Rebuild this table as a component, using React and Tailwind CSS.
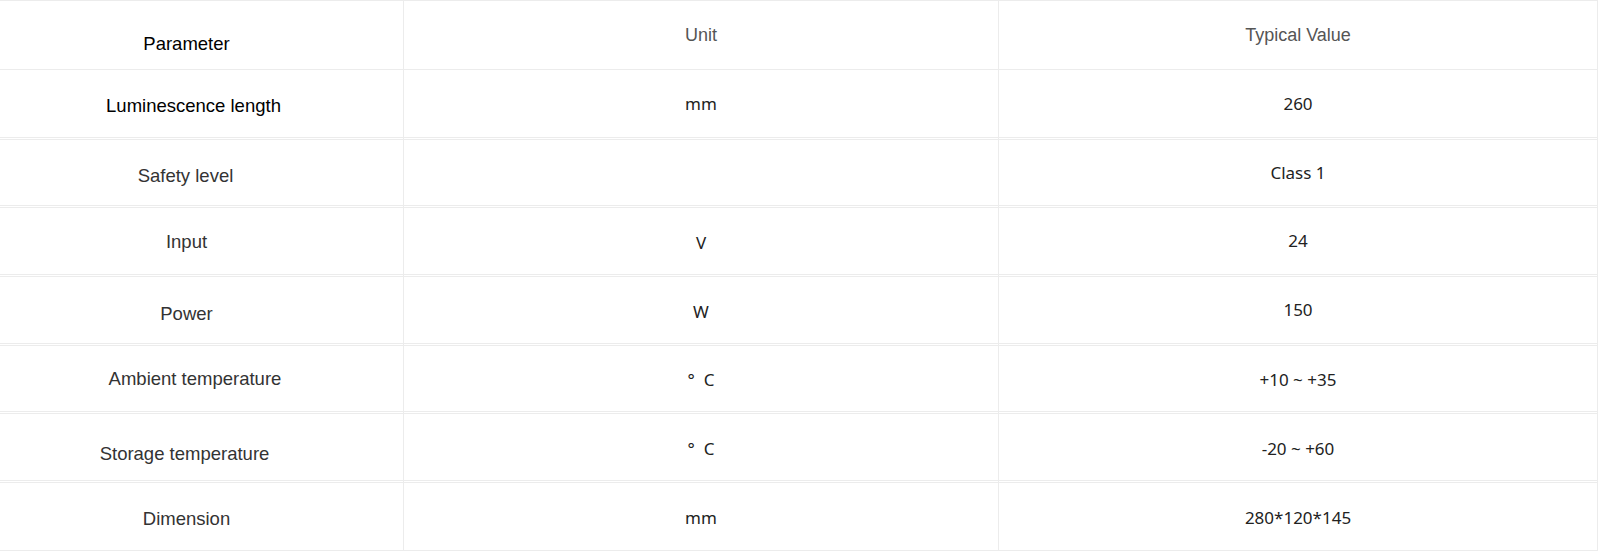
import React from 'react';

const rows = [
  {
    h: 'h-[70px]',
    line: 'border-t border-b',
    cells: [
      { text: 'Parameter', cls: 'pr-[30px] pt-[17px] text-black font-["Liberation_Sans",Arial,sans-serif] text-[18.5px]' },
      { text: 'Unit', cls: 'text-[#555] font-["Liberation_Sans",Arial,sans-serif] text-[18px]' },
      { text: 'Typical Value', cls: 'text-[#555] font-["Liberation_Sans",Arial,sans-serif] text-[18px]' },
    ],
  },
  {
    h: 'h-[70px]',
    line: 'border-b-[3px] border-double',
    cells: [
      { text: 'Luminescence length', cls: 'pr-[16px] pt-[5px] text-black font-["Liberation_Sans",Arial,sans-serif] text-[18.5px]' },
      { text: 'mm' },
      { text: '260' },
    ],
  },
  {
    h: 'h-[68px]',
    line: 'border-b-[3px] border-double',
    cells: [
      { text: 'Safety level', cls: 'pr-[32px] pt-[6px]' },
      { text: '' },
      { text: 'Class 1' },
    ],
  },
  {
    h: 'h-[69px]',
    line: 'border-b-[3px] border-double',
    cells: [
      { text: 'Input', cls: 'pr-[30px] pt-[1px]' },
      { text: 'V', val: 'pt-[3px]' },
      { text: '24' },
    ],
  },
  {
    h: 'h-[69px]',
    line: 'border-b-[3px] border-double',
    cells: [
      { text: 'Power', cls: 'pr-[30px] pt-[7px]' },
      { text: 'W', val: 'pt-[3px]' },
      { text: '150' },
    ],
  },
  {
    h: 'h-[68px]',
    line: 'border-b-[3px] border-double',
    cells: [
      { text: 'Ambient temperature', cls: 'pr-[13px]' },
      { text: '°\u00a0\u00a0C', val: 'pt-[2px]' },
      { text: '+10 ~ +35', val: 'pt-[2px]' },
    ],
  },
  {
    h: 'h-[69px]',
    line: 'border-b-[3px] border-double',
    cells: [
      { text: 'Storage temperature', cls: 'pr-[34px] pt-[13px]' },
      { text: '°\u00a0\u00a0C', val: 'pt-[3px]' },
      { text: '-20 ~ +60', val: 'pt-[3px]' },
    ],
  },
  {
    h: 'h-[68px]',
    line: 'border-b',
    cells: [
      { text: 'Dimension', cls: 'pr-[30px] pt-[4px]' },
      { text: 'mm', val: 'pt-[3px]' },
      { text: '280*120*145', val: 'pt-[3px]' },
    ],
  },
];

const widths = ['w-[404px]', 'w-[595px]', 'w-[599px]'];

export default function App() {
  return (
    <div className="w-[1599px] h-[552px] bg-white overflow-hidden">
      <div className="w-[1598px] flex flex-col">
        {rows.map((row, i) => (
          <div key={i} className={`flex ${row.h}`}>
            {row.cells.map((cell, j) => {
              const textCls =
                j === 0
                  ? cell.cls.includes('text-black')
                    ? cell.cls
                    : `${cell.cls} text-[#333] font-["Liberation_Sans",Arial,sans-serif] text-[18.5px]`
                  : cell.cls
                  ? cell.cls
                  : `text-[#222] font-["Noto_Sans","Open_Sans",sans-serif] text-[17px] ${cell.val || ''}`;
              return (
                <div
                  key={j}
                  className={`${widths[j]} ${row.line} border-r border-[#ececec] flex items-center justify-center ${textCls}`}
                >
                  <span className="whitespace-pre">{cell.text}</span>
                </div>
              );
            })}
          </div>
        ))}
      </div>
    </div>
  );
}
